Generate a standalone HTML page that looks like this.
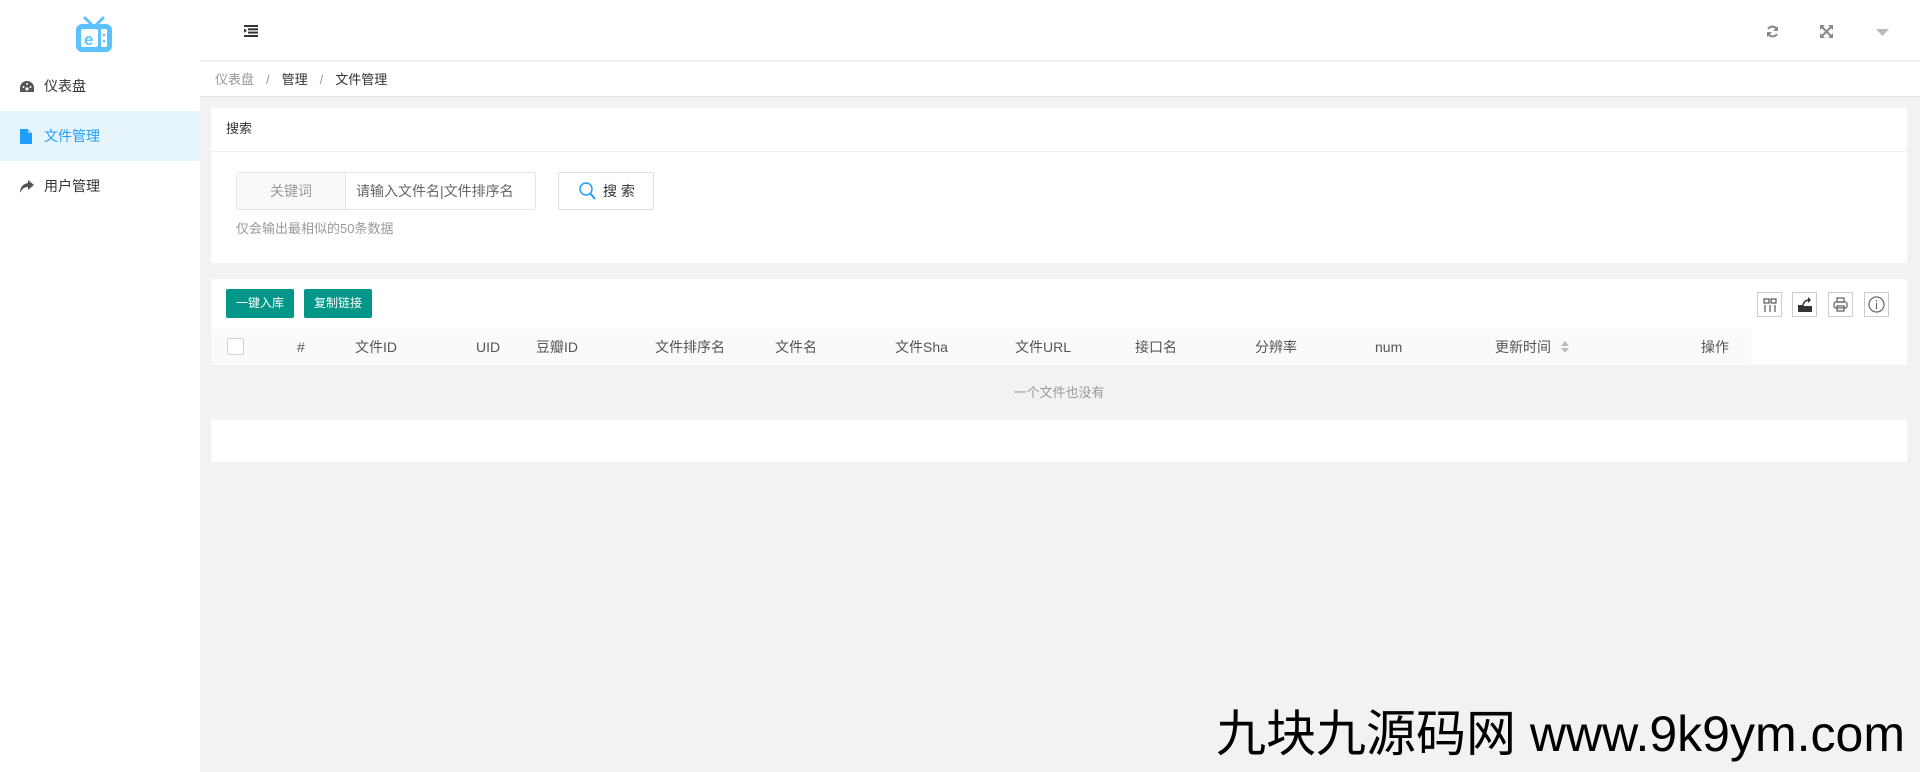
<!DOCTYPE html><html><head><meta charset="utf-8"><style>
*{margin:0;padding:0;box-sizing:border-box}
body{width:1920px;height:772px;background:#f2f2f2;font-family:"Liberation Sans","Noto Sans CJK SC",sans-serif;font-size:14px;color:#333;position:relative;overflow:hidden}
.a{position:absolute}
.side{left:0;top:0;width:200px;height:772px;background:#fff}
.mi{left:0;width:200px;height:50px;line-height:50px;padding-left:44px;color:#333;font-size:14px}
.hd{left:200px;top:0;width:1720px;height:61px;background:#fff;border-bottom:1px solid #f0f0f0}
.bc{left:200px;top:62px;width:1720px;height:35px;background:#fff;border-bottom:1px solid #e2e2e2;line-height:35px;padding-left:15px;font-size:13px}
.card{background:#fff;left:211px;width:1696px}
.btn{background:#009688;color:#fff;font-size:12px;height:29px;line-height:29px;text-align:center;border-radius:2px}
.th{top:329px;height:36px;line-height:36px;font-size:14px;color:#555}
.tb{width:25px;height:25px;border:1px solid #ccc;top:292px}
</style></head><body>
<div class="a side"></div>
<svg class="a" style="left:73px;top:16px" width="42" height="38" viewBox="0 0 42 38"><path d="M12 2l6 6M30 2l-6 6" stroke="#5cc2ff" stroke-width="3" stroke-linecap="round"/><rect x="3" y="8" width="36" height="28" rx="6" fill="#5cc2ff"/><rect x="8" y="13" width="17" height="18" rx="2" fill="#fff"/><rect x="28" y="13" width="6" height="18" rx="1" fill="#fff"/><circle cx="31" cy="19" r="1.3" fill="#5cc2ff"/><circle cx="31" cy="25" r="1.3" fill="#5cc2ff"/><text x="11" y="29" font-size="17" font-weight="bold" fill="#5cc2ff" font-family="Liberation Sans">e</text></svg>
<div class="a mi" style="top:61px">仪表盘</div>
<svg class="a" style="left:20px;top:81px" width="14" height="12" viewBox="0 0 14 12"><path d="M7 0A7 7 0 0 0 0 7v4h14V7A7 7 0 0 0 7 0z" fill="#555"/><circle cx="7" cy="8" r="1.6" fill="#fff"/><circle cx="3.5" cy="6" r="1" fill="#fff"/><circle cx="10.5" cy="6" r="1" fill="#fff"/><circle cx="7" cy="3" r="1" fill="#fff"/></svg>
<div class="a mi" style="top:111px;background:#e6f4fd;color:#1e9fff">文件管理</div>
<svg class="a" style="left:20px;top:129px" width="12" height="15" viewBox="0 0 12 15"><path d="M0 0h8l4 4v11H0z" fill="#1e9fff"/><path d="M8 0v4h4" fill="#9fd3ff"/></svg>
<div class="a mi" style="top:161px">用户管理</div>
<svg class="a" style="left:20px;top:180px" width="14" height="13" viewBox="0 0 14 13"><path d="M8 0l6 5-6 5V7C4 7 2 9 0 13 0 7 3 4 8 3z" fill="#555"/></svg>
<div class="a hd"></div>
<svg class="a" style="left:244px;top:25px" width="14" height="12" viewBox="0 0 14 12"><rect x="0" y="0" width="14" height="2" fill="#333"/><rect x="4" y="3.3" width="10" height="2" fill="#333"/><rect x="4" y="6.6" width="10" height="2" fill="#333"/><rect x="0" y="10" width="14" height="2" fill="#333"/><path d="M0 3.5l3 2.2-3 2.2z" fill="#333"/></svg>
<svg class="a" style="left:1766px;top:25px" width="13" height="13" viewBox="0 0 13 13"><path d="M11 5A5 5 0 0 0 2 4M2 8a5 5 0 0 0 9 1" stroke="#888" stroke-width="2" fill="none"/><path d="M12 1v5H7zM1 12V7h5z" fill="#888"/></svg>
<svg class="a" style="left:1820px;top:25px" width="13" height="13" viewBox="0 0 13 13"><path d="M1 1l11 11M12 1L1 12" stroke="#888" stroke-width="2"/><path d="M0 0h5L0 5zM13 0H8l5 5zM0 13h5l-5-5zM13 13H8l5-5z" fill="#888"/></svg>
<svg class="a" style="left:1876px;top:29px" width="13" height="7"><path d="M0 0h13L6.5 7z" fill="#bbb"/></svg>
<div class="a bc"><span style="color:#999">仪表盘</span><span style="color:#999;margin:0 12px">/</span><span>管理</span><span style="color:#999;margin:0 12px">/</span><span>文件管理</span></div>
<div class="a card" style="top:108px;height:155px"></div>
<div class="a" style="left:226px;top:120px;font-size:13px;line-height:18px">搜索</div>
<div class="a" style="left:211px;top:151px;width:1696px;height:1px;background:#f0f0f0"></div>
<div class="a" style="left:236px;top:172px;width:300px;height:38px;border:1px solid #e6e6e6;border-radius:2px"></div>
<div class="a" style="left:237px;top:173px;width:109px;height:36px;background:#fafafa;border-right:1px solid #e6e6e6;text-align:center;line-height:36px;color:#999">关键词</div>
<div class="a" style="left:356px;top:173px;line-height:36px;color:#666">请输入文件名|文件排序名</div>
<div class="a" style="left:558px;top:172px;width:96px;height:38px;border:1px solid #ddd;border-radius:2px;line-height:36px;padding-left:44px;font-size:14px">搜 索</div>
<svg class="a" style="left:579px;top:182px" width="17" height="18" viewBox="0 0 17 18"><circle cx="7" cy="7" r="6" stroke="#1e9fff" stroke-width="1.5" fill="none"/><path d="M11 11l5 6" stroke="#1e9fff" stroke-width="2"/></svg>
<div class="a" style="left:236px;top:218px;color:#999;font-size:13px">仅会输出最相似的50条数据</div>
<div class="a card" style="top:279px;height:86px"></div>
<div class="a" style="left:211px;top:420px;width:1696px;height:42px;background:#fff"></div>
<div class="a btn" style="left:226px;top:289px;width:68px">一键入库</div>
<div class="a btn" style="left:304px;top:289px;width:68px">复制链接</div>
<div class="a" style="left:211px;top:329px;width:1540px;height:36px;background:#fafafa"></div>
<div class="a" style="left:227px;top:338px;width:17px;height:17px;border:1px solid #d2d2d2;background:#fff;border-radius:2px"></div>
<div class="a th" style="left:297px">#</div>
<div class="a th" style="left:355px">文件ID</div>
<div class="a th" style="left:476px">UID</div>
<div class="a th" style="left:536px">豆瓣ID</div>
<div class="a th" style="left:655px">文件排序名</div>
<div class="a th" style="left:775px">文件名</div>
<div class="a th" style="left:895px">文件Sha</div>
<div class="a th" style="left:1015px">文件URL</div>
<div class="a th" style="left:1135px">接口名</div>
<div class="a th" style="left:1255px">分辨率</div>
<div class="a th" style="left:1375px">num</div>
<div class="a th" style="left:1495px">更新时间</div>
<svg class="a" style="left:1561px;top:341px" width="8" height="12"><path d="M0 5h8L4 0zM0 7h8l-4 5z" fill="#bbb"/></svg>
<div class="a th" style="left:1701px">操作</div>
<div class="a" style="left:211px;top:365px;width:1696px;line-height:55px;text-align:center;color:#999;font-size:13px">一个文件也没有</div>
<div class="a tb" style="left:1757px"></div><div class="a tb" style="left:1792px"></div><div class="a tb" style="left:1828px"></div><div class="a tb" style="left:1864px"></div>
<svg class="a" style="left:1763px;top:298px" width="14" height="14" viewBox="0 0 14 14" fill="none" stroke="#333"><rect x="1" y="1" width="5" height="4"/><rect x="8" y="1" width="5" height="4"/><path d="M2 7v7M7 7v7M12 7v7"/></svg>
<svg class="a" style="left:1798px;top:297px" width="14" height="15" viewBox="0 0 14 15"><path d="M0 8h5l1 1h8v6H0z" fill="#333"/><path d="M5 8c1-4 4-5 6-5" stroke="#333" stroke-width="1.5" fill="none"/><path d="M10 0l3 3-3 3z" fill="#333"/></svg>
<svg class="a" style="left:1833px;top:297px" width="15" height="15" viewBox="0 0 15 15" fill="none" stroke="#666" stroke-width="1.3"><rect x="4" y="1" width="7" height="4"/><rect x="1" y="5" width="13" height="6" rx="2"/><rect x="4" y="9" width="7" height="5"/></svg>
<svg class="a" style="left:1868px;top:296px" width="17" height="17" viewBox="0 0 17 17" fill="none" stroke="#666" stroke-width="1.2"><circle cx="8.5" cy="8.5" r="7.5"/><path d="M8.5 7v6M8.5 4v1.5"/></svg>
<div class="a" style="left:1216px;top:704px;font-size:50px;color:#000;white-space:nowrap;line-height:60px">九块九源码网 www.9k9ym.com</div>
</body></html>
